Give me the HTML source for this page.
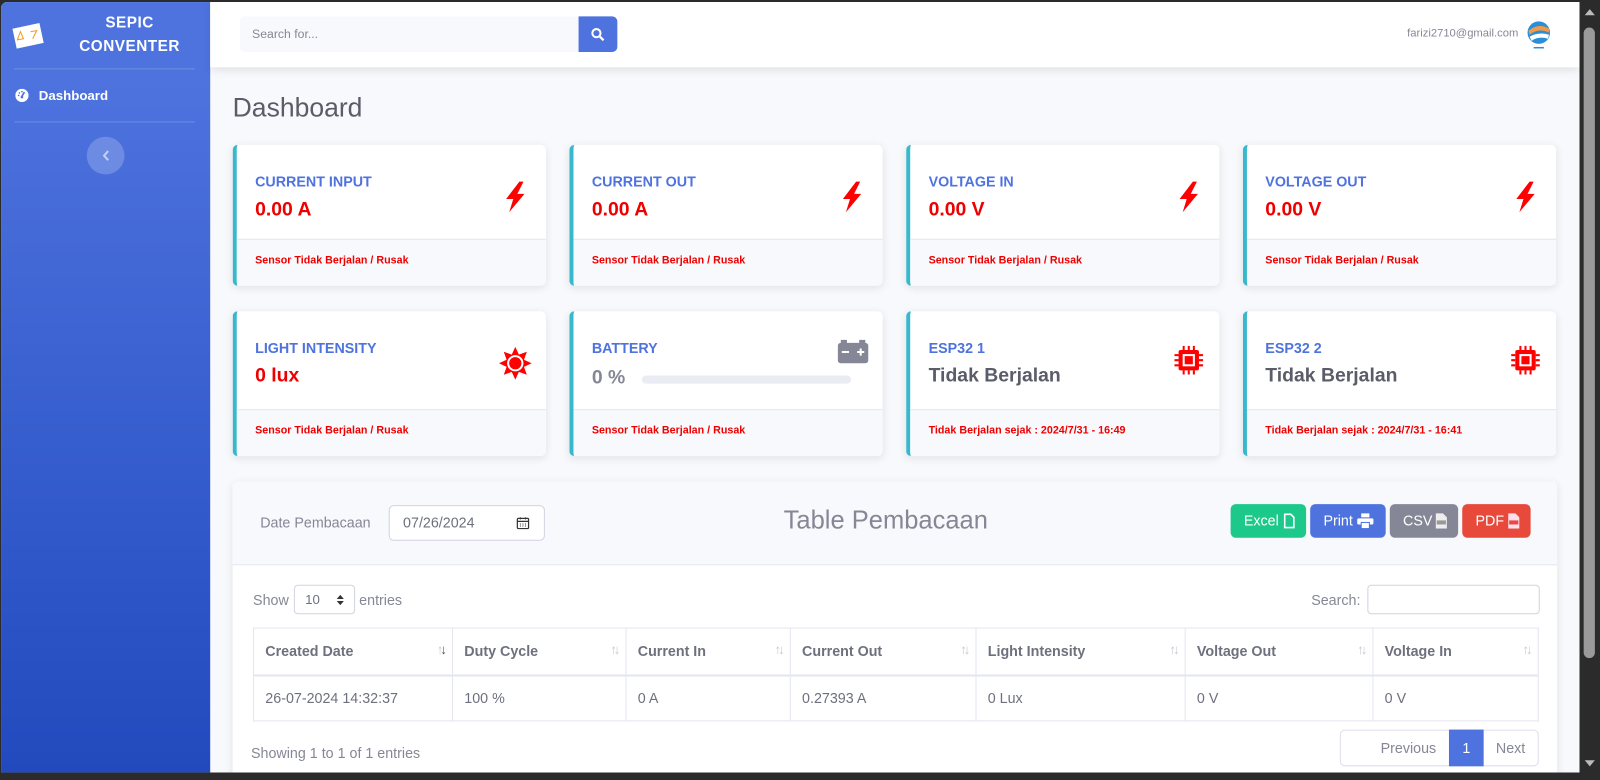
<!DOCTYPE html>
<html><head><meta charset="utf-8"><style>
*{box-sizing:border-box;margin:0;padding:0}
html,body{width:1600px;height:780px;overflow:hidden;background:#2b2b2b;font-family:"Liberation Sans",sans-serif}
#w{position:absolute;left:0;top:0;width:1568px;height:764px;transform:scale(1.0204);transform-origin:0 0}
#app{position:absolute;left:1px;top:2px;width:1547px;height:755px;background:#f8f9fc;overflow:hidden;border-radius:6px 0 0 0}
.abs{position:absolute}
#sb{left:0;top:0;width:205px;height:755px;background:linear-gradient(180deg,#4e73df 10%,#224abe 100%)}
.brand{color:#fff;font-weight:700;font-size:15px;text-align:center;line-height:23px;left:58px;width:136px;top:9px;letter-spacing:.5px}
.hr{height:1px;background:rgba(255,255,255,.2);left:13px;width:177px}
#top{left:205px;top:0;width:1342px;height:64px;background:#fff;box-shadow:0 3px 8px rgba(58,59,69,.12)}
.card{position:absolute;width:307px;background:#fff;border-left:4px solid #36b9cc;border-radius:5px;box-shadow:0 2px 8px rgba(58,59,69,.12);overflow:hidden}
.card .t{position:absolute;left:18px;font-size:14px;color:#4e73df;font-weight:700}
.card .v{position:absolute;left:18px;font-size:19px;color:#e00;font-weight:700}
.card .f{position:absolute;left:0;right:0;bottom:0;background:#f8f9fc;border-top:1px solid #e3e6f0;font-size:10.5px;font-weight:700;color:#e00;padding-left:18px}
.card svg{position:absolute}
.btn{position:absolute;top:492px;height:33px;border-radius:5px;color:#fff;font-size:14px;line-height:33px;padding-left:13px}
th,td{border:1px solid #e3e6f0;text-align:left;padding:0 11px;font-size:14px;color:#6e707e}
th{height:46px;font-weight:700;border-bottom:2px solid #e3e6f0;position:relative}
td{height:45px}
th span{position:absolute;right:8px;top:13px;font-size:13px;color:#c8cad4;letter-spacing:-3px}
</style></head><body><div id="w">
<div id="app">
<div id="sb" class="abs">
 <svg class="abs" style="left:10px;top:20px" width="34" height="28" viewBox="0 0 34 28"><rect x="3" y="3" width="27" height="20" fill="#fff" transform="rotate(-12 17 13)"/><path d="M9 9 L6 17 L12 16 Z M19 9 L25 8 L21 16" stroke="#f29a1f" stroke-width="1" fill="none"/></svg>
 <div class="abs brand">SEPIC<br>CONVENTER</div>
 <div class="abs hr" style="top:65px"></div>
 <svg class="abs" style="left:14px;top:85px" width="13" height="13" viewBox="0 0 16 16"><circle cx="8" cy="8" r="8" fill="#fff"/><path d="M8 9 L11 4" stroke="#4e73df" stroke-width="2"/><circle cx="8" cy="10" r="1.6" fill="#4e73df"/><circle cx="4" cy="8" r="1" fill="#4e73df"/><circle cx="5" cy="5" r="1" fill="#4e73df"/><circle cx="8" cy="3.5" r="1" fill="#4e73df"/></svg>
 <div class="abs" style="left:37px;top:84px;color:#fff;font-weight:700;font-size:13px">Dashboard</div>
 <div class="abs hr" style="top:117px"></div>
 <div class="abs" style="left:84px;top:132px;width:37px;height:37px;border-radius:50%;background:rgba(255,255,255,.2)"></div>
 <svg class="abs" style="left:98px;top:144px" width="9" height="13" viewBox="0 0 9 13"><path d="M7 2 L3 6.5 L7 11" stroke="rgba(255,255,255,.6)" stroke-width="2" fill="none"/></svg>
</div>
<div id="top" class="abs">
 <div class="abs" style="left:29px;top:14px;width:333px;height:35px;background:#f8f9fc;border-radius:5px 0 0 5px;font-size:12px;color:#858796;line-height:35px;padding-left:12px">Search for...</div>
 <div class="abs" style="left:361px;top:14px;width:38px;height:35px;background:#4e73df;border-radius:0 5px 5px 0"><svg class="abs" style="left:12px;top:11px" width="14" height="14" viewBox="0 0 14 14"><circle cx="5.5" cy="5.5" r="4" stroke="#fff" stroke-width="2" fill="none"/><path d="M8.5 8.5 L12.5 12.5" stroke="#fff" stroke-width="2.2"/></svg></div>
 <div class="abs" style="right:60px;top:25px;font-size:11px;color:#858796">farizi2710@gmail.com</div>
 <svg class="abs" style="left:1287px;top:17px" width="30" height="30" viewBox="0 0 30 30"><circle cx="15" cy="13" r="11" fill="#2a8fd6"/><path d="M5 11 Q15 3 25 9 L25 13 Q15 8 6 15Z" fill="#f29a4a"/><path d="M6 17 Q15 12 25 15 L24 19 Q15 16 8 21Z" fill="#fff"/><rect x="10" y="27" width="10" height="1.5" fill="#2a8fd6"/></svg>
</div>
<div class="abs" style="left:227px;top:88px;font-size:26px;color:#5a5c69">Dashboard</div>

<div class="card" style="left:227px;top:140px;height:138px"><div class="t" style="top:28px">CURRENT INPUT</div><div class="v" style="top:53px">0.00 A</div><svg style="left:259px;top:35px" width="28" height="32" viewBox="0 0 28 32"><path d="M18 1 L5 18 L12 18 L8 31 L23 13 L16 13 L22 1Z" fill="#f00"/></svg><div class="f" style="height:46px;line-height:40px">Sensor Tidak Berjalan / Rusak</div></div>
<div class="card" style="left:557px;top:140px;height:138px"><div class="t" style="top:28px">CURRENT OUT</div><div class="v" style="top:53px">0.00 A</div><svg style="left:259px;top:35px" width="28" height="32" viewBox="0 0 28 32"><path d="M18 1 L5 18 L12 18 L8 31 L23 13 L16 13 L22 1Z" fill="#f00"/></svg><div class="f" style="height:46px;line-height:40px">Sensor Tidak Berjalan / Rusak</div></div>
<div class="card" style="left:887px;top:140px;height:138px"><div class="t" style="top:28px">VOLTAGE IN</div><div class="v" style="top:53px">0.00 V</div><svg style="left:259px;top:35px" width="28" height="32" viewBox="0 0 28 32"><path d="M18 1 L5 18 L12 18 L8 31 L23 13 L16 13 L22 1Z" fill="#f00"/></svg><div class="f" style="height:46px;line-height:40px">Sensor Tidak Berjalan / Rusak</div></div>
<div class="card" style="left:1217px;top:140px;height:138px"><div class="t" style="top:28px">VOLTAGE OUT</div><div class="v" style="top:53px">0.00 V</div><svg style="left:259px;top:35px" width="28" height="32" viewBox="0 0 28 32"><path d="M18 1 L5 18 L12 18 L8 31 L23 13 L16 13 L22 1Z" fill="#f00"/></svg><div class="f" style="height:46px;line-height:40px">Sensor Tidak Berjalan / Rusak</div></div>

<div class="card" style="left:227px;top:303px;height:142px"><div class="t" style="top:28px">LIGHT INTENSITY</div><div class="v" style="top:53px">0 lux</div><svg style="left:256px;top:34px" width="34" height="34" viewBox="0 0 34 34"><polygon points="17,1 20.5,8.5 28.3,5.7 25.5,13.5 33,17 25.5,20.5 28.3,28.3 20.5,25.5 17,33 13.5,25.5 5.7,28.3 8.5,20.5 1,17 8.5,13.5 5.7,5.7 13.5,8.5" fill="#f00"/><circle cx="17" cy="17" r="7" fill="none" stroke="#fff" stroke-width="2"/><circle cx="17" cy="17" r="5.5" fill="#f00"/></svg><div class="f" style="height:46px;line-height:40px">Sensor Tidak Berjalan / Rusak</div></div>
<div class="card" style="left:557px;top:303px;height:142px"><div class="t" style="top:28px">BATTERY</div><div class="v" style="top:55px;color:#858796">0 %</div><div style="position:absolute;left:67px;top:63px;width:205px;height:8px;border-radius:4px;background:#eaecf4"></div><svg style="left:259px;top:28px" width="30" height="24" viewBox="0 0 30 24"><rect x="3" y="0" width="6" height="4" fill="#858796"/><rect x="21" y="0" width="6" height="4" fill="#858796"/><rect x="0" y="3" width="30" height="20" rx="3" fill="#858796"/><path d="M4 12h7M19 12h7M22.5 8.5v7" stroke="#fff" stroke-width="2"/></svg><div class="f" style="height:46px;line-height:40px">Sensor Tidak Berjalan / Rusak</div></div>
<div class="card" style="left:887px;top:303px;height:142px"><div class="t" style="top:28px">ESP32 1</div><div class="v" style="top:53px;color:#5a5c69">Tidak Berjalan</div><svg style="left:258px;top:33px" width="30" height="30" viewBox="0 0 30 30"><rect x="5" y="5" width="20" height="20" rx="2" fill="#f00"/><rect x="9" y="9" width="12" height="12" fill="#fff"/><rect x="11" y="11" width="8" height="8" fill="#f00"/><path d="M10 1v4M15 1v4M20 1v4M10 25v4M15 25v4M20 25v4M1 10h4M1 15h4M1 20h4M25 10h4M25 15h4M25 20h4" stroke="#f00" stroke-width="2"/></svg><div class="f" style="height:46px;line-height:40px">Tidak Berjalan sejak : 2024/7/31 - 16:49</div></div>
<div class="card" style="left:1217px;top:303px;height:142px"><div class="t" style="top:28px">ESP32 2</div><div class="v" style="top:53px;color:#5a5c69">Tidak Berjalan</div><svg style="left:258px;top:33px" width="30" height="30" viewBox="0 0 30 30"><rect x="5" y="5" width="20" height="20" rx="2" fill="#f00"/><rect x="9" y="9" width="12" height="12" fill="#fff"/><rect x="11" y="11" width="8" height="8" fill="#f00"/><path d="M10 1v4M15 1v4M20 1v4M10 25v4M15 25v4M20 25v4M1 10h4M1 15h4M1 20h4M25 10h4M25 15h4M25 20h4" stroke="#f00" stroke-width="2"/></svg><div class="f" style="height:46px;line-height:40px">Tidak Berjalan sejak : 2024/7/31 - 16:41</div></div>

<div class="abs" style="left:227px;top:470px;width:1298px;height:300px;background:#fff;border-radius:5px;box-shadow:0 2px 8px rgba(58,59,69,.12);overflow:hidden">
 <div class="abs" style="left:0;top:0;width:1298px;height:82px;background:#f8f9fc;border-bottom:1px solid #e3e6f0"></div>
</div>
<div class="abs" style="left:254px;top:502px;font-size:14px;color:#858796">Date Pembacaan</div>
<div class="abs" style="left:380px;top:493px;width:153px;height:35px;border:1px solid #d1d3e2;border-radius:5px;background:#fff;font-size:14px;color:#6e707e;line-height:33px;padding-left:13px">07/26/2024<svg class="abs" style="left:124px;top:10px" width="13" height="13" viewBox="0 0 13 13"><rect x="1" y="2" width="11" height="10" rx="1" fill="none" stroke="#333" stroke-width="1.2"/><path d="M1 5h11M4 1v2M9 1v2" stroke="#333" stroke-width="1.2"/><path d="M3.5 7.5h1M6 7.5h1M8.5 7.5h1M3.5 9.5h1M6 9.5h1M8.5 9.5h1" stroke="#333"/></svg></div>
<div class="abs" style="left:767px;top:494px;font-size:25px;color:#858796">Table Pembacaan</div>
<div class="btn" style="left:1205px;width:74px;background:#1cc88a">Excel<svg style="position:absolute;left:52px;top:9px" width="11" height="15" viewBox="0 0 11 15"><path d="M1 1h6l3 3v10H1z" fill="none" stroke="#fff" stroke-width="1.6"/></svg></div>
<div class="btn" style="left:1283px;width:74px;background:#4e73df">Print<svg style="position:absolute;left:46px;top:9px" width="16" height="15" viewBox="0 0 16 15"><rect x="4" y="0" width="8" height="4" fill="#fff"/><rect x="0" y="5" width="16" height="6" rx="1.5" fill="#fff"/><rect x="4" y="9" width="8" height="6" fill="#fff" stroke="#4e73df"/></svg></div>
<div class="btn" style="left:1361px;width:67px;background:#858796">CSV<svg style="position:absolute;left:45px;top:9px" width="11" height="15" viewBox="0 0 11 15"><path d="M0 0h7l4 4v11H0z" fill="#eee"/><rect x="1" y="7" width="9" height="4" fill="#999"/></svg></div>
<div class="btn" style="left:1432px;width:67px;background:#e74a3b">PDF<svg style="position:absolute;left:45px;top:9px" width="11" height="15" viewBox="0 0 11 15"><path d="M0 0h7l4 4v11H0z" fill="#fde"/><rect x="1" y="7" width="9" height="4" fill="#e74a3b"/></svg></div>

<div class="abs" style="left:247px;top:578px;font-size:14px;color:#858796">Show</div>
<div class="abs" style="left:287px;top:571px;width:60px;height:29px;border:1px solid #d1d3e2;border-radius:4px;background:#fff;font-size:13px;color:#6e707e;line-height:27px;padding-left:10px">10<svg style="position:absolute;right:10px;top:9px" width="7" height="10" viewBox="0 0 7 10"><path d="M0 4L3.5 0L7 4ZM0 6L3.5 10L7 6Z" fill="#333"/></svg></div>
<div class="abs" style="left:351px;top:578px;font-size:14px;color:#858796">entries</div>
<div class="abs" style="left:1284px;top:578px;font-size:14px;color:#858796">Search:</div>
<div class="abs" style="left:1339px;top:571px;width:169px;height:29px;border:1px solid #d1d3e2;border-radius:4px;background:#fff"></div>

<table class="abs" style="left:247px;top:613px;width:1260px;border-collapse:collapse">
<tr><th style="width:195px">Created Date<span style="color:#c8cad4">↑<b style="color:#555">↓</b></span></th><th style="width:170px">Duty Cycle<span>↑↓</span></th><th style="width:161px">Current In<span>↑↓</span></th><th style="width:182px">Current Out<span>↑↓</span></th><th style="width:205px">Light Intensity<span>↑↓</span></th><th style="width:184px">Voltage Out<span>↑↓</span></th><th>Voltage In<span>↑↓</span></th></tr>
<tr><td>26-07-2024 14:32:37</td><td>100 %</td><td>0 A</td><td>0.27393 A</td><td>0 Lux</td><td>0 V</td><td>0 V</td></tr>
</table>
<div class="abs" style="left:245px;top:728px;font-size:14px;color:#858796">Showing 1 to 1 of 1 entries</div>
<div class="abs" style="left:1312px;top:713px;width:195px;height:36px;border:1px solid #dddfeb;border-radius:5px;background:#fff;font-size:14px;color:#858796;line-height:34px">
 <span class="abs" style="left:39px">Previous</span>
 <div class="abs" style="left:106px;top:-1px;width:34px;height:36px;background:#4e73df;color:#fff;text-align:center;line-height:36px">1</div>
 <span class="abs" style="left:152px">Next</span>
</div>
</div>
<div class="abs" style="left:1548px;top:0;width:20px;height:764px;background:#2b2b2b"></div>
<svg class="abs" style="left:1552px;top:8px" width="12" height="8" viewBox="0 0 12 8"><path d="M1 7L6 1L11 7Z" fill="#bbb"/></svg>
<div class="abs" style="left:1552px;top:27px;width:11px;height:618px;border-radius:6px;background:#9a9a9a"></div>
<svg class="abs" style="left:1552px;top:744px" width="12" height="8" viewBox="0 0 12 8"><path d="M1 1L6 7L11 1Z" fill="#bbb"/></svg>
</div></body></html>
